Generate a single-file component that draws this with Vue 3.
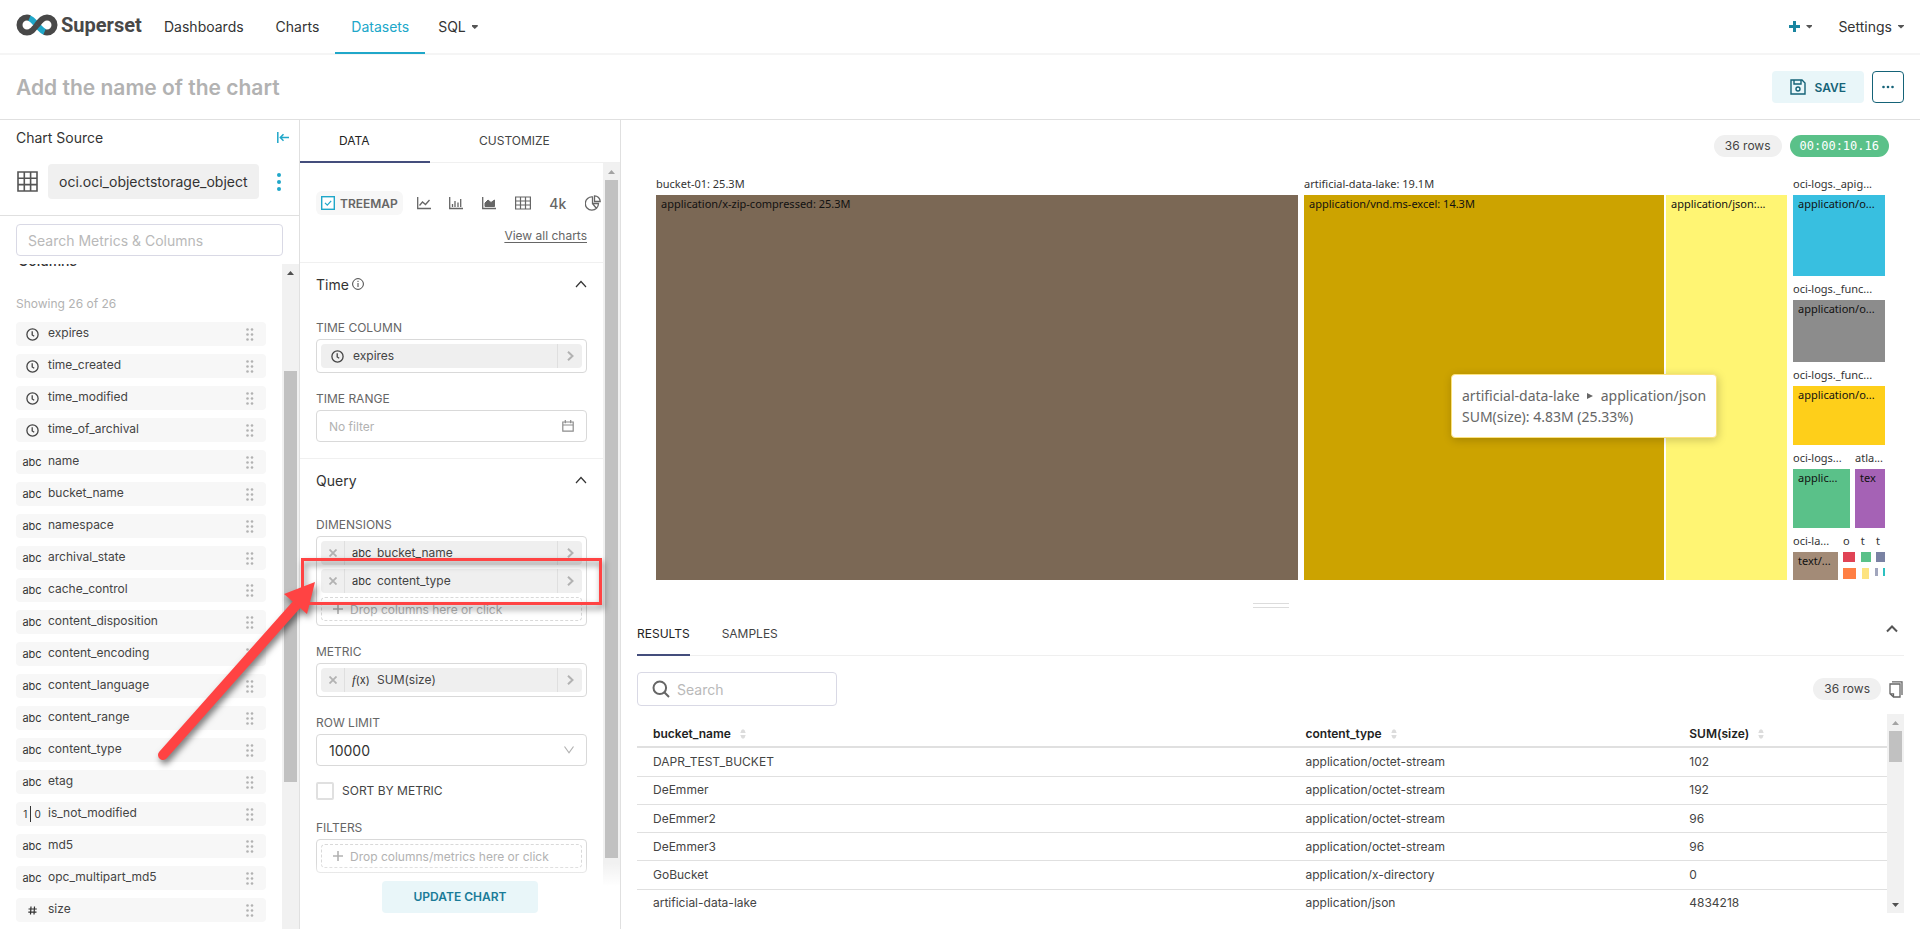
<script setup>
import { ref } from 'vue'

const columns = [
  ['time', 'expires'],
  ['time', 'time_created'],
  ['time', 'time_modified'],
  ['time', 'time_of_archival'],
  ['abc', 'name'],
  ['abc', 'bucket_name'],
  ['abc', 'namespace'],
  ['abc', 'archival_state'],
  ['abc', 'cache_control'],
  ['abc', 'content_disposition'],
  ['abc', 'content_encoding'],
  ['abc', 'content_language'],
  ['abc', 'content_range'],
  ['abc', 'content_type'],
  ['abc', 'etag'],
  ['bool', 'is_not_modified'],
  ['abc', 'md5'],
  ['abc', 'opc_multipart_md5'],
  ['num', 'size'],
]

const rows = [
  ['DAPR_TEST_BUCKET', 'application/octet-stream', '102'],
  ['DeEmmer', 'application/octet-stream', '192'],
  ['DeEmmer2', 'application/octet-stream', '96'],
  ['DeEmmer3', 'application/octet-stream', '96'],
  ['GoBucket', 'application/x-directory', '0'],
  ['artificial-data-lake', 'application/json', '4834218'],
]

const logGroups = [
  { name: 'oci-logs._apig...', type: 'application/o...', weight: 81, color: '#38bfe0' },
  { name: 'oci-logs._func...', type: 'application/o...', weight: 62, color: '#8c8c8c' },
  { name: 'oci-logs._func...', type: 'application/o...', weight: 59, color: '#fecf1a' },
]

const sortByMetric = ref(false)
const rowLimit = ref('10000')
</script>

<template>
  <div class="page">
    <nav class="nav">
      <a class="logo" href="#">
        <svg width="42" height="22" viewBox="0 0 42 22" fill="none" stroke-width="6">
          <path d="M12.500 3.800C19 5.500 23 16.500 29.500 18.200" stroke="#20a7c9" />
          <path d="M21 11 C17 16 15 18.500 11 18.500 A7.500 7.500 0 0 1 11 3.500 C12 3.500 12.600 3.600 13.500 4" stroke="#484848" />
          <path d="M20.800 11.200 C25 6 27 3.500 31 3.500 A7.500 7.500 0 0 1 31 18.500 C30 18.500 29.400 18.400 28.500 18" stroke="#484848" />
        </svg>
        <span>Superset</span>
      </a>
      <a class="nav-item" href="#">Dashboards</a>
      <a class="nav-item" href="#">Charts</a>
      <a class="nav-item active" href="#">Datasets</a>
      <a class="nav-item sub" href="#">SQL <i class="caret"></i></a>
      <div class="nav-right">
        <button class="nav-btn" aria-label="New">
          <svg width="11" height="11" viewBox="0 0 11 11" stroke="#1a85a0" stroke-width="3"><path d="M5.500 0V11M0 5.500H11" /></svg>
          <i class="caret"></i>
        </button>
        <button class="nav-btn">Settings <i class="caret"></i></button>
      </div>
    </nav>

    <header class="title-bar">
      <input class="title" type="text" placeholder="Add the name of the chart" aria-label="Chart name" />
      <button class="save">
        <svg width="16" height="16" viewBox="0 0 16 16" fill="none" stroke="#156378" stroke-width="1.400">
          <path d="M1 1H12L15 4V15H1Z" /><path d="M4 1V5H11V1" /><circle cx="8" cy="10" r="2" />
        </svg>
        SAVE
      </button>
      <button class="more" aria-label="More">
        <svg width="12" height="4" viewBox="0 0 12 4" fill="#156378"><circle cx="1.500" cy="2" r="1.300" /><circle cx="6" cy="2" r="1.300" /><circle cx="10.500" cy="2" r="1.300" /></svg>
      </button>
    </header>

    <main class="body">
      <aside class="source">
        <div class="source-head">
          <span>Chart Source</span>
          <button class="plain" aria-label="Collapse">
            <svg width="12" height="11" viewBox="0 0 12 11" fill="none" stroke="#20a7c9" stroke-width="1.500"><path d="M.8 0V11M3.500 5.500H12M6.500 2.200L3.300 5.500L6.500 8.800" /></svg>
          </button>
        </div>
        <div class="dataset">
          <svg width="21" height="21" viewBox="0 0 21 21" fill="none" stroke="#555" stroke-width="1.600"><path d="M1 1H20V20H1ZM1 7.300H20M1 13.600H20M7.300 1V20M13.600 1V20" /></svg>
          <span class="dataset-name">oci.oci_objectstorage_object</span>
          <button class="plain kebab" aria-label="Dataset menu">
            <svg width="4" height="18" viewBox="0 0 4 18" fill="#20a7c9"><circle cx="2" cy="2" r="2" /><circle cx="2" cy="9" r="2" /><circle cx="2" cy="16" r="2" /></svg>
          </button>
        </div>
        <div class="source-search">
          <input type="text" placeholder="Search Metrics &amp; Columns" aria-label="Search Metrics &amp; Columns" />
        </div>
        <div class="list-wrap">
          <div class="list">
            <h3>Columns</h3>
            <p>Showing 26 of 26</p>
            <ul>
              <li v-for="c in columns" :key="c[1]">
                <span class="kind">
                  <svg v-if="c[0] === 'time'" width="13" height="13" viewBox="0 0 13 13" fill="none" stroke="#444" stroke-width="1.300"><circle cx="6.500" cy="6.500" r="5.600" /><path d="M6.200 3.300V7L8.200 8.300" /></svg>
                  <template v-else-if="c[0] === 'abc'">abc</template>
                  <span v-else-if="c[0] === 'bool'" class="bool"><b>1</b><i></i><b>0</b></span>
                  <svg v-else width="9" height="9" viewBox="0 0 9 9" stroke="#333" stroke-width="1.200"><path d="M3 .5L2.500 8.500M6.500 .5L6 8.500M.5 3H8.800M.3 6.200H8.500" /></svg>
                </span>
                <span class="col-name">{{ c[1] }}</span>
                <svg width="8" height="13" viewBox="0 0 8 13" fill="#b2b2b2">
                  <template v-for="y in [1.5, 6.5, 11.5]" :key="y"><circle cx="1.500" :cy="y" r="1.300" /><circle cx="6" :cy="y" r="1.300" /></template>
                </svg>
              </li>
            </ul>
          </div>
          <div class="scroll source-scroll"><i class="up"></i><i class="thumb"></i></div>
        </div>
      </aside>

      <section class="controls">
        <div class="tabs">
          <button class="tab data">DATA</button>
          <button class="tab">CUSTOMIZE</button>
        </div>
        <div class="controls-main">
          <form class="form" @submit.prevent>
            <div class="viz">
              <button class="treemap-btn" type="button">
                <svg width="14" height="14" viewBox="0 0 14 14" fill="#fff" stroke="#20a7c9"><rect x=".7" y=".7" width="12.600" height="12.600" stroke-width="1.400" /><path d="M4 6.800L6.300 9.200L10.200 4.800" fill="none" stroke-width="1.200" /></svg>
                TREEMAP
              </button>
              <div class="viz-icons">
                <button class="plain" type="button" aria-label="Line chart"><svg width="14" height="14" viewBox="0 0 14 14" fill="none" stroke="#666" stroke-width="1.300"><path d="M.7 1V12.500H14M2.500 9.500L5.500 6L8.500 8.500L12.500 4" /></svg></button>
                <button class="plain" type="button" aria-label="Bar chart"><svg width="14" height="14" viewBox="0 0 14 14" fill="none" stroke="#666" stroke-width="1.300"><path d="M.7 1V12.500H14M3.500 11V8M6 11V5M9 11V6.500M11.700 11V3" /></svg></button>
                <button class="plain" type="button" aria-label="Area chart"><svg width="14" height="14" viewBox="0 0 14 14" fill="none" stroke="#666" stroke-width="1.300"><path d="M.7 1V12.500H14" /><path d="M3 10.500V7L6 4L9 6.500L12.500 4V10.500Z" fill="#666" stroke-width="1" /></svg></button>
                <button class="plain" type="button" aria-label="Table"><svg width="16" height="14" viewBox="0 0 16 14" fill="none" stroke="#666" stroke-width="1.200"><path d="M.6 1H15.400V13H.6ZM.6 5H15.400M.6 9H15.400M5.500 1V13M10.500 1V13" /></svg></button>
                <button class="plain fourk" type="button">4k</button>
                <button class="plain" type="button" aria-label="Pie chart"><svg width="16" height="16" viewBox="0 0 16 16" fill="none" stroke="#666" stroke-width="1.300"><path d="M7.500 2A6.600 6.600 0 1 0 13.500 8.500H7.500ZM7.500 8.500L11.500 13.500" /><path d="M9.500 .8V6.500H15.200A5.700 5.700 0 0 0 9.500 .8Z" /></svg></button>
              </div>
            </div>
            <div class="view-all"><a href="#">View all charts</a></div>

            <section class="section">
              <h2>
                <span>Time</span>
                <svg width="12" height="12" viewBox="0 0 12 12" fill="none" stroke="#444"><circle cx="6" cy="6" r="5.400" /><path d="M6 5V9M6 2.800V4" /></svg>
                <svg class="chev" width="12" height="8" viewBox="0 0 12 8" fill="none" stroke="#333" stroke-width="1.200"><path d="M1 7L6 1.500L11 7" /></svg>
              </h2>
              <div class="field">
                <span class="label">TIME COLUMN</span>
                <div class="drop">
                  <div class="pill">
                    <span class="pill-clock"><svg width="13" height="13" viewBox="0 0 13 13" fill="none" stroke="#444" stroke-width="1.300"><circle cx="6.500" cy="6.500" r="5.600" /><path d="M6.200 3.300V7L8.200 8.300" /></svg></span>
                    <span class="pill-name">expires</span>
                    <span class="go"><svg width="7" height="10" viewBox="0 0 7 10" fill="none" stroke="#b2b2b2" stroke-width="2"><path d="M1 .8L5.500 5L1 9.200" /></svg></span>
                  </div>
                </div>
              </div>
              <div class="field">
                <span class="label">TIME RANGE</span>
                <button class="box range" type="button">
                  <span>No filter</span>
                  <svg width="12" height="12" viewBox="0 0 12 12" fill="none" stroke="#8c8c8c" stroke-width="1.200"><path d="M.8 2H11.200V11.200H.8ZM.8 5H11.200M3.300 0V3.200M8.700 0V3.200" /></svg>
                </button>
              </div>
            </section>

            <section class="section query">
              <h2>
                <span>Query</span>
                <svg class="chev" width="12" height="8" viewBox="0 0 12 8" fill="none" stroke="#333" stroke-width="1.200"><path d="M1 7L6 1.500L11 7" /></svg>
              </h2>
              <div class="field">
                <span class="label">DIMENSIONS</span>
                <div class="drop">
                  <div v-for="n in ['bucket_name', 'content_type']" :key="n" class="pill">
                    <button class="x" type="button" aria-label="Remove"><svg width="8" height="8" viewBox="0 0 8 8" stroke="#b2b2b2" stroke-width="1.800"><path d="M.5 .5L7.500 7.500M7.500 .5L.5 7.500" /></svg></button>
                    <span class="pill-kind">abc</span>
                    <span class="pill-name">{{ n }}</span>
                    <span class="go"><svg width="7" height="10" viewBox="0 0 7 10" fill="none" stroke="#b2b2b2" stroke-width="2"><path d="M1 .8L5.500 5L1 9.200" /></svg></span>
                  </div>
                  <button class="add" type="button"><svg width="10" height="10" viewBox="0 0 10 10" stroke="#b2b2b2" stroke-width="1.600"><path d="M5 0V10M0 5H10" /></svg>Drop columns here or click</button>
                </div>
              </div>
              <div class="field">
                <span class="label">METRIC</span>
                <div class="drop">
                  <div class="pill">
                    <button class="x" type="button" aria-label="Remove"><svg width="8" height="8" viewBox="0 0 8 8" stroke="#b2b2b2" stroke-width="1.800"><path d="M.5 .5L7.500 7.500M7.500 .5L.5 7.500" /></svg></button>
                    <span class="pill-kind"><em>f</em>(x)</span>
                    <span class="pill-name">SUM(size)</span>
                    <span class="go"><svg width="7" height="10" viewBox="0 0 7 10" fill="none" stroke="#b2b2b2" stroke-width="2"><path d="M1 .8L5.500 5L1 9.200" /></svg></span>
                  </div>
                </div>
              </div>
              <div class="field">
                <label class="label" for="row-limit">ROW LIMIT</label>
                <div class="box">
                  <select id="row-limit" v-model="rowLimit"><option>10000</option><option>50000</option></select>
                  <svg width="10" height="8" viewBox="0 0 10 8" fill="none" stroke="#b2b2b2" stroke-width="1.200"><path d="M.5 .5L5 6.800L9.500 .5" /></svg>
                </div>
              </div>
              <div class="field check">
                <input id="sort-metric" v-model="sortByMetric" type="checkbox" />
                <label for="sort-metric">SORT BY METRIC</label>
              </div>
              <div class="field">
                <span class="label">FILTERS</span>
                <div class="drop">
                  <button class="add" type="button"><svg width="10" height="10" viewBox="0 0 10 10" stroke="#b2b2b2" stroke-width="1.600"><path d="M5 0V10M0 5H10" /></svg>Drop columns/metrics here or click</button>
                </div>
              </div>
            </section>
          </form>
          <div class="scroll controls-scroll"><i class="up dim"></i><i class="thumb"></i></div>
          <div class="update-bar"><button class="update">UPDATE CHART</button></div>
        </div>
      </section>

      <section class="chart">
        <div class="chart-head">
          <span class="rows">36 rows</span>
          <span class="timer">00:00:10.16</span>
        </div>
        <div class="treemap">
          <div class="group g-bucket">
            <span class="g-name">bucket-01: 25.3M</span>
            <div class="cells"><div class="cell brown">application/x-zip-compressed: 25.3M</div></div>
          </div>
          <div class="group g-lake">
            <span class="g-name">artificial-data-lake: 19.1M</span>
            <div class="cells">
              <div class="cell gold">application/vnd.ms-excel: 14.3M</div>
              <div class="cell yellow">application/json:...</div>
            </div>
          </div>
          <div class="g-logs">
            <div v-for="(g, i) in logGroups" :key="i" class="group" :style="{ flexGrow: g.weight }">
              <span class="g-name">{{ g.name }}</span>
              <div class="cells"><div class="cell" :style="{ background: g.color }">{{ g.type }}</div></div>
            </div>
            <div class="pair w59">
              <div class="group w57"><span class="g-name">oci-logs...</span><div class="cells"><div class="cell green">applic...</div></div></div>
              <div class="group w30"><span class="g-name">atla...</span><div class="cells"><div class="cell purple">tex</div></div></div>
            </div>
            <div class="pair w28">
              <div class="group w45"><span class="g-name">oci-la...</span><div class="cells"><div class="cell taupe">text/...</div></div></div>
              <div class="tiny">
                <div class="tiny-names"><span>o</span><span>t</span><span>t</span></div>
                <svg width="42" height="28" viewBox="0 0 42 28">
                  <rect x="0" y="0" width="12" height="10" fill="#e04355" />
                  <rect x="18" y="0" width="10" height="10" fill="#5ac189" />
                  <rect x="33" y="0" width="9" height="10" fill="#7a82a3" />
                  <rect x="0" y="16" width="13" height="11" fill="#ff7f44" />
                  <rect x="19" y="16" width="7" height="11" fill="#fde380" />
                  <rect x="32" y="16" width="3" height="8" fill="#a1a6bd" />
                  <rect x="40" y="16" width="2" height="8" fill="#2cc1c1" />
                </svg>
              </div>
            </div>
          </div>
          <div class="tooltip">
            <div>artificial-data-lake<svg width="6" height="6" viewBox="0 0 6 6" fill="#666"><path d="M0 0L6 3L0 6Z" /></svg>application/json</div>
            <div>SUM(size): 4.83M (25.33%)</div>
          </div>
        </div>
        <div class="handle"></div>
        <div class="results">
          <div class="r-tabs">
            <button class="r-tab on">RESULTS</button>
            <button class="r-tab">SAMPLES</button>
            <button class="plain r-chev" aria-label="Collapse results"><svg width="12" height="8" viewBox="0 0 12 8" fill="none" stroke="#555" stroke-width="2"><path d="M1 6.500L6 1.500L11 6.500" /></svg></button>
          </div>
          <div class="r-tools">
            <label class="r-search">
              <svg width="18" height="18" viewBox="0 0 18 18" fill="none" stroke="#666" stroke-width="2"><circle cx="7.800" cy="7.800" r="6.300" /><path d="M12.300 12.300L17 17" /></svg>
              <input type="text" placeholder="Search" aria-label="Search" />
            </label>
            <span class="rows">36 rows</span>
            <button class="plain" aria-label="Copy"><svg width="14" height="17" viewBox="0 0 14 17" fill="none" stroke="#666" stroke-width="1.300"><path d="M3 .8H13V14M1 3H11V16H4.500L1 12.800ZM1 12.800H4.500V16" /></svg></button>
          </div>
          <div class="grid-wrap">
            <div class="grid">
              <table>
                <colgroup><col class="c1" /><col class="c2" /><col class="c3" /></colgroup>
                <thead>
                  <tr>
                    <th v-for="h in ['bucket_name', 'content_type', 'SUM(size)']" :key="h">{{ h }}<svg width="6" height="10" viewBox="0 0 6 10" fill="#dcdcdc"><path d="M.3 4L1.500 1L3 .2L4.500 1L5.700 4ZM.3 6L1.500 9L3 9.800L4.500 9L5.700 6Z" /></svg></th>
                  </tr>
                </thead>
                <tbody>
                  <tr v-for="r in rows" :key="r[0]"><td v-for="v in r" :key="v">{{ v }}</td></tr>
                </tbody>
              </table>
            </div>
            <div class="scroll grid-scroll"><i class="up dim"></i><i class="thumb"></i><i class="down"></i></div>
          </div>
        </div>
      </section>
    </main>

    <svg class="annotation" width="620" height="780" viewBox="0 0 620 780" fill="none">
      <rect x="302.500" y="559.500" width="298" height="44" stroke="#ff4343" stroke-width="3" />
      <path d="M163 755L298 603" stroke="#ff4343" stroke-width="10" stroke-linecap="round" />
      <path d="M315 582L284 594L307 614Z" fill="#ff4343" />
    </svg>
  </div>
</template>

<style>
body { margin: 0; }
</style>

<style scoped>
.page {
  position: relative;
  display: flex;
  flex-direction: column;
  height: 100vh;
  overflow: hidden;
  background: #fff;
  color: #333;
  font-family: Inter, "Liberation Sans", sans-serif;
  font-size: 14px;
}
.page *, .page { box-sizing: border-box; }
svg { display: block; flex: none; }
button { font: inherit; color: inherit; border: 0; background: none; padding: 0; cursor: pointer; display: flex; align-items: center; }
input, select { font: inherit; color: inherit; border: 0; outline: 0; background: none; padding: 0; min-width: 0; }
input::placeholder { color: #b9b9b9; opacity: 1; }
a { color: inherit; text-decoration: none; }

.nav { display: flex; flex: none; height: 55px; border-bottom: 2px solid #f5f5f5; padding: 0 16px; align-items: stretch; line-height: 20px; }
.logo { display: flex; align-items: center; gap: 3px; width: 132px; padding-bottom: 4px; font: bold 20px/22px Roboto, sans-serif; color: #484848; }
.nav-item { display: flex; align-items: center; padding: 2px 16px 0; margin-bottom: -1px; border-bottom: 2px solid transparent; }
.nav-item.active { color: #20a7c9; border-color: #20a7c9; }
.nav-item.sub { padding: 2px 13px 0; }
.caret { width: 6px; height: 4px; margin-left: 6px; background: #555; clip-path: polygon(0 0, 100% 0, 100% 30%, 50% 100%, 0 30%); }
.nav-right { display: flex; margin-left: auto; gap: 26px; }

.title-bar { display: flex; flex: none; align-items: center; gap: 8px; height: 65px; padding: 0 16px; border-bottom: 1px solid #e0e0e0; }
.title { flex: 1; font-size: 21px; font-weight: 600; height: 32px; }
.title::placeholder { color: #b2b2b2; }
.save { gap: 8px; height: 32px; padding: 0 18px; border-radius: 4px; background: #e9f6f9; color: #156378; font-size: 12px; font-weight: 600; }
.more { width: 32px; height: 32px; justify-content: center; border: 1px solid #156378; border-radius: 4px; }

.body { display: flex; flex: 1; min-height: 0; }
.source { display: flex; flex-direction: column; flex: none; width: 300px; border-right: 1px solid #e0e0e0; }
.source-head { display: flex; justify-content: space-between; align-items: center; height: 35px; padding: 0 10px 0 16px; }
.dataset { display: flex; align-items: center; gap: 10px; height: 61px; padding: 9px 18px 16px 17px; border-bottom: 1px solid #e0e0e0; }
.kebab { margin-left: auto; }
.dataset-name { padding: 0 11px; line-height: 35px; border-radius: 4px; background: #f0f0f0; }
.source-search { padding: 8px 16px; }
.source-search input { width: 100%; height: 32px; padding: 0 11px; border: 1px solid #d9d9e5; border-radius: 4px; }
.list-wrap { display: flex; flex: 1; min-height: 0; overflow: hidden; }
.list { flex: 1; padding: 0 16px; }
h3 { margin: -13px 0 0; padding-left: 2px; font-size: 14px; line-height: 20px; font-weight: 500; }
.list p { margin: 25px 0 10px; line-height: 16px; font-size: 12px; color: #b2b2b2; }
.list ul { list-style: none; margin: 0; padding: 0; display: flex; flex-direction: column; gap: 8px; }
.list li { display: flex; align-items: center; height: 24px; padding: 0 12px 0 6px; border-radius: 4px; background: #f7f7f7; font-size: 12px; }
.kind { display: flex; justify-content: center; width: 20px; margin-right: 6px; font-size: 11px; color: #333; }
.col-name { flex: 1; padding-bottom: 3px; color: #444; }
.bool { display: flex; align-items: center; gap: 3px; }
.bool b { font-weight: 400; font-size: 10px; }
.bool i { width: 1px; height: 16px; background: #333; }

.scroll { display: flex; flex-direction: column; align-items: center; flex: none; width: 17px; background: #f1f1f1; }
.up, .down { width: 7px; height: 4px; margin: 7px 0 6px; background: #505050; clip-path: polygon(50% 0, 100% 100%, 0 100%); }
.down { clip-path: polygon(0 0, 100% 0, 50% 100%); margin-top: auto; }
.up.dim { background: #a3a3a3; }
.thumb { width: 13px; background: #c1c1c1; }
.source-scroll .thumb { height: 411px; margin-top: 90px; }

.controls { display: flex; flex-direction: column; flex: none; width: 321px; border-right: 1px solid #e0e0e0; }
.tabs { display: flex; flex: none; height: 43px; font-size: 12px; border-bottom: 1px solid #f0f0f0; }
.tab { padding: 0 49px 2px; height: 43px; color: #444; }
.tab.data { width: 130px; padding: 0 39px; border-bottom: 2px solid #444e7c; color: #222; }
.controls-main { position: relative; display: flex; flex: 1; min-height: 0; overflow: hidden; }
.form { flex: 1; min-width: 0; }
.controls-scroll .thumb { flex: 1; margin-bottom: 71px; }
.update-bar { position: absolute; left: 0; right: 0; bottom: 0; padding: 18px 0 16px; display: flex; justify-content: center; background: linear-gradient(rgba(255, 255, 255, 0), #fff 35%); }
.update { width: 156px; height: 32px; padding-bottom: 1px; justify-content: center; border-radius: 4px; background: #e9f6f9; color: #1a7b98; font-size: 12px; font-weight: 600; }
.viz { display: flex; align-items: center; gap: 14px; padding: 28px 2px 0 16px; height: 52px; }
.viz-icons { display: flex; flex: 1; align-items: center; justify-content: space-between; }
.treemap-btn { height: 24px; padding: 0 5px; gap: 5px; border-radius: 6px; background: #f7f7f7; color: #666; font-size: 12px; font-weight: 600; }
.fourk { color: #666; font-size: 14px; font-weight: 500; }
.view-all { height: 47px; padding: 13px 16px 0 0; text-align: right; font-size: 12px; line-height: 16px; color: #666; }
.view-all a { text-decoration: underline; text-underline-offset: 2px; }
.section { padding: 0 16px; border-top: 1px solid #f0f0f0; }
h2 { display: flex; align-items: center; gap: 3px; height: 42px; margin: 0 0 13px; font-size: 14px; font-weight: 400; }
.query h2 { margin-bottom: 14px; }
.chev { margin-left: auto; }
.field { padding-bottom: 16px; font-size: 12px; }
.label { display: block; line-height: 19px; margin-bottom: 2px; color: #666; }
.drop { display: flex; flex-direction: column; gap: 4px; padding: 4px; border: 1px solid #d9d9d9; border-radius: 4px; }
.pill { display: flex; align-items: center; height: 24px; border-radius: 4px; background: #efefef; color: #444; }
.x { justify-content: center; width: 24px; height: 24px; border-right: 1px solid #dfdfdf; }
.go { display: flex; justify-content: center; align-items: center; width: 25px; height: 24px; border-left: 1px solid #dfdfdf; }
.pill-clock { width: 32px; padding-left: 10px; }
.pill-kind { width: 32px; padding-left: 7px; font-size: 11px; color: #333; }
.pill-kind em { font-family: "Liberation Serif", serif; font-size: 13px; }
.pill-name { flex: 1; padding-bottom: 2px; }
.add { height: 24px; gap: 7px; padding: 0 11px; border: 1px dashed #d9d9d9; border-radius: 4px; color: #b2b2b2; }
.box { display: flex; align-items: center; justify-content: space-between; width: 100%; height: 32px; padding: 0 12px; border: 1px solid #d9d9d9; border-radius: 4px; }
.range { color: #b2b2b2; }
select { flex: 1; appearance: none; font-size: 14px; }
.check { display: flex; gap: 8px; align-items: flex-start; height: 36px; color: #444; line-height: 18px; }
.check input { appearance: none; width: 18px; height: 18px; margin: 0; border: 2px solid #e0e0e0; border-radius: 2px; }

.chart { display: flex; flex-direction: column; flex: 1; min-width: 0; }
.chart-head { display: flex; flex: none; justify-content: flex-end; gap: 8px; height: 56px; padding: 15px 31px 0 0; }
.rows, .timer { height: 22px; line-height: 22px; padding: 0 11px; border-radius: 11px; font-size: 12px; background: #f0f0f0; color: #444; }
.timer { padding: 0 10px; background: #5ac189; color: #fff; font-family: "DejaVu Sans Mono", monospace; }
.treemap { position: relative; display: flex; flex: 1; gap: 6px; min-height: 0; margin: 0 35px; font: 11px/17px "Noto Sans", sans-serif; color: #333; }
.group { display: flex; flex-direction: column; flex-basis: 0; min-width: 0; min-height: 0; }
.g-bucket { flex-grow: 642; }
.g-lake { flex-grow: 483; }
.g-logs { display: flex; flex-direction: column; flex: 92 0 0; gap: 5px; min-width: 0; }
.g-logs > * { flex-basis: 19px; }
.g-name { flex: none; height: 19px; line-height: 16px; white-space: nowrap; overflow: hidden; }
.cells { display: flex; flex: 1; gap: 2px; min-height: 0; }
.cell { flex: 1; padding-left: 5px; white-space: nowrap; overflow: hidden; color: #111; }
.brown { background: #7b6855; }
.gold { background: #cca300; flex: 355 0 0; }
.yellow { background: #fff573; flex: 116 0 0; }
.green { background: #5ac189; }
.purple { background: #a562b5; }
.taupe { background: #a38b77; }
.pair { display: flex; gap: 5px; min-height: 0; }
.w59 { flex-grow: 59; }
.w28 { flex-grow: 28; }
.w57 { flex-grow: 57; }
.w30 { flex-grow: 30; }
.w45 { flex-grow: 45; }
.tiny { flex: none; }
.tiny-names { display: flex; justify-content: space-between; height: 19px; line-height: 16px; padding-right: 5px; }
.tooltip { position: absolute; left: 795px; top: 198px; padding: 10px; border: 1px solid #fde380; border-radius: 4px; background: #fff; box-shadow: 1px 2px 10px rgba(0, 0, 0, 0.2); color: #666; font-size: 14px; line-height: 21px; white-space: nowrap; }
.tooltip svg { display: inline-block; margin: 0 8px 2px 7px; }

.handle { flex: none; align-self: center; width: 36px; height: 5px; margin: 23px 0 5px; border: solid #dcdcdc; border-width: 1px 0; }
.results { flex: none; padding: 0 16px 16px; }
.r-tabs { display: flex; align-items: stretch; gap: 32px; height: 43px; border-bottom: 1px solid #efefef; font-size: 12px; }
.r-tab { height: 43px; border-bottom: 2px solid transparent; color: #444; }
.r-tab.on { border-color: #444e7c; color: #222; }
.r-chev { margin-left: auto; padding: 0 6px 10px 0; }
.r-tools { display: flex; align-items: center; gap: 8px; padding: 16px 1px 8px 0; }
.r-search { display: flex; align-items: center; gap: 7px; width: 200px; height: 34px; padding: 0 14px; margin-right: auto; border: 1px solid #d9d9e5; border-radius: 4px; }
.r-search input { flex: 1; }
.grid-wrap { display: flex; height: 199px; overflow: hidden; }
.grid { flex: 1; overflow: hidden; }
table { width: 100%; height: 204px; table-layout: fixed; border-collapse: collapse; font-size: 12px; }
.c1 { width: 52.2%; }
.c2 { width: 30.7%; }
.c3 { width: 17.1%; }
th, td { padding: 0 16px 1px; text-align: left; }
th { height: 33px; padding-top: 7px; font-weight: 600; color: #222; border-bottom: 2px solid #e0e0e0; }
th svg { display: inline-block; margin-left: 9px; vertical-align: -1px; }
td { border-bottom: 1px solid #e0e0e0; color: #444; }
.grid-scroll .thumb { height: 31px; }

.annotation { position: absolute; left: 0; top: 0; pointer-events: none; filter: drop-shadow(2px 4px 3px rgba(0, 0, 0, 0.5)); }
</style>
